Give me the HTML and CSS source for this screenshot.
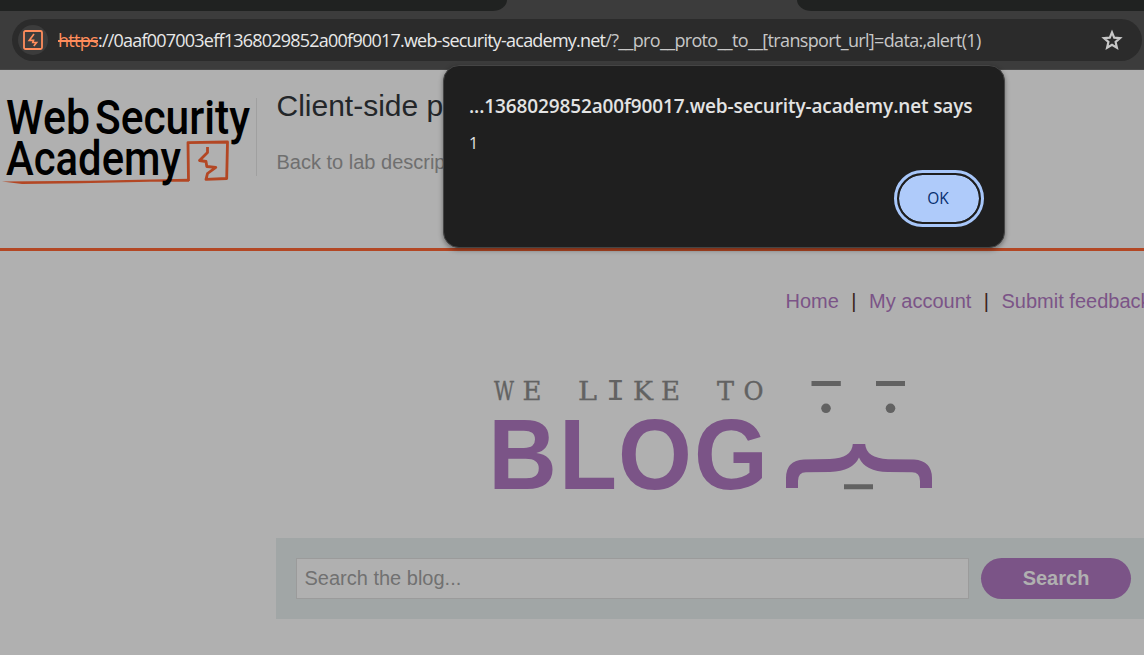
FILE: index.html
```html
<!DOCTYPE html>
<html lang="en">
<head>
<meta charset="utf-8">
<title>Client-side prototype pollution</title>
<link rel="stylesheet" href="styles.css">
</head>
<body>
<div class="window">
  <header class="browser">
    <div class="tabs"><div class="tab-left"></div><div class="tab-right"></div></div>
    <div class="address">
      <span class="site-icon">
        <svg width="20" height="20" viewBox="0 0 20 20"><rect x="1" y="1" width="18" height="18" rx="1.5" fill="none" stroke="#ff8d5c" stroke-width="1.8"/><path d="M11 4 6.300 10.300H10.500L9.800 12.500H13.500L10.800 16" fill="none" stroke="#ff8d5c" stroke-width="1.700"/></svg>
      </span>
      <span class="url"><span class="scheme">https</span><span class="host"><span class="dim">://</span>0aaf007003eff1368029852a00f90017.web-security-academy.net</span><span class="path">/?__pro__proto__to__[transport_url]=data:,alert(1)</span></span>
      <svg class="star" width="24" height="24" viewBox="0 0 24 24"><path d="m12 4.300 2.200 5.400 5.800.5-4.400 3.800 1.300 5.700-4.900-3-4.900 3 1.300-5.700L4 10.200l5.800-.5z" fill="none" stroke="#c7c7c7" stroke-width="2.200"/></svg>
    </div>
  </header>
  <main class="page">
    <section class="lab-header">
      <svg class="logo" width="256" height="110" viewBox="0 85 256 110">
        <g class="logo-text">
          <text x="6" y="134" textLength="84" lengthAdjust="spacingAndGlyphs">Web</text>
          <text x="95" y="134" textLength="155" lengthAdjust="spacingAndGlyphs">Security</text>
        </g>
        <g fill="none" stroke="#b34724" stroke-width="2.8" stroke-linejoin="round">
          <path d="M188.500 181 188 142.600 227.500 142 226.700 178.500 206 179.400 207.500 173.500 215.800 167.300 206.800 166.500 206 161.500 199.500 160.500 207.500 152.500 207.500 147"/>
        </g>
        <path d="M2 181.500 90 180.700 189 178.800v3L150 181.700 80 183.300 22 184z" fill="#b34724"/>
        <text class="logo-text" x="6" y="175" textLength="175" lengthAdjust="spacingAndGlyphs">Academy</text>
      </svg>
      <div class="divider"></div>
      <div class="titles">
        <h1>Client-side p</h1>
        <a class="back">Back to lab descrip</a>
      </div>
    </section>
    <nav class="links"><a>Home</a><span>|</span><a>My account</a><span>|</span><a>Submit feedback</a></nav>
    <svg class="blog-logo" width="450" height="130" viewBox="490 370 450 130">
      <text class="slab" y="400"><tspan x="494" textLength="20" lengthAdjust="spacingAndGlyphs">W</tspan><tspan x="522.500" textLength="19" lengthAdjust="spacingAndGlyphs">E</tspan> <tspan x="578" textLength="19" lengthAdjust="spacingAndGlyphs">L</tspan><tspan class="mono" x="606" textLength="19" lengthAdjust="spacingAndGlyphs">I</tspan><tspan x="633" textLength="20" lengthAdjust="spacingAndGlyphs">K</tspan><tspan x="661" textLength="19" lengthAdjust="spacingAndGlyphs">E</tspan> <tspan x="717" textLength="17" lengthAdjust="spacingAndGlyphs">T</tspan><tspan x="743.500" textLength="20" lengthAdjust="spacingAndGlyphs">O</tspan></text>
      <text class="blog" y="489" transform="scale(.95 1)" x="514 588.500 650.500 730.500">BLOG</text>
      <path d="M811.500 381h29.300v5h-29.300zM876 381h29v5h-29zM844 484.300h29v5h-29z" fill="#626262"/>
      <circle cx="826" cy="408.300" r="4.800" fill="#626262"/><circle cx="890.500" cy="408.300" r="4.800" fill="#626262"/>
      <path d="M786 488v-10Q786 460.500 804 459.500L830 459Q852 458 852.800 444H865.200Q866 458 888 459.200L914 459.500Q932 461 932 478V488H920V481Q920 472.500 912 472.300L888 472Q865 471.500 859 457.500Q853 471 830 472L806 472.300Q798 472.500 798 481V488z" fill="#7b5487"/>
    </svg>
    <form class="search"><input type="text" placeholder="Search the blog..."><button type="button">Search</button></form>
  </main>
  <div class="dialog" role="alertdialog">
    <div class="dialog-title"><span>...1368029852a00f90017.web-security-academy.net says</span></div>
    <div class="dialog-body">1</div>
    <button class="ok" type="button">OK</button>
  </div>
</div>
</body>
</html>
```
FILE: styles.css
```css
* { box-sizing: border-box; }
body { margin: 0; background: #b0b0b0; font-family: "Liberation Sans", Arial, sans-serif; overflow: hidden; }
.window { position: relative; width: 1144px; height: 655px; overflow: hidden; }
.browser { height: 70px; background: #3c3c3c; border-bottom: 1px solid #484848; }
.tabs { display: flex; justify-content: space-between; height: 11px; margin-bottom: 8px; }
.tab-left, .tab-right { background: #202221; height: 11px; }
.tab-left { width: 507px; border-bottom-right-radius: 16px 12px; }
.tab-right { width: 347px; border-bottom-left-radius: 16px 12px; }
.address { display: flex; align-items: center; height: 42px; width: 1130px; margin-left: 12px; padding: 0 18px 0 6px; border-radius: 21px; background: #2b2b2b; }
.site-icon { display: flex; align-items: center; justify-content: center; width: 30px; height: 30px; border-radius: 50%; background: #3c3c3c; flex: none; }
.url { margin-left: 10px; flex: 1; white-space: nowrap; font: 18px/26px "Open Sans", "Noto Sans", sans-serif; color: #c7c7c7; }
.url span { display: inline-block; }
.scheme { color: #ff8d5c; text-decoration: line-through; text-decoration-thickness: 2px; letter-spacing: -0.7px; }
.host { color: #e8e8e8; letter-spacing: -0.78px; }
.path { letter-spacing: -0.66px; }
.star { flex: none; }
.lab-header { display: flex; height: 181px; padding-top: 15px; border-bottom: 3px solid #b34724; }
.logo, .divider { flex: none; }
.logo { overflow: visible; }
.logo-text { font-family: Roboto, sans-serif; font-size: 48px; font-weight: 500; fill: #000; }
.divider { width: 1px; height: 78px; margin-top: 13px; background: #a0a0a0; }
.titles { margin-left: 19.500px; white-space: nowrap; }
h1 { margin: 4px 0 0; font-size: 30px; line-height: 34px; font-weight: 400; color: #232629; }
.back { display: block; margin-top: 27px; font-size: 20px; line-height: 24px; color: #6f6f6f; }
.links { display: flex; margin: 38px 0 0 785.500px; font-size: 20px; line-height: 24px; white-space: nowrap; color: #7b5487; }
.links span { margin: 0 12.500px; color: #3b251c; }
.blog-logo { display: block; margin: 57px 0 0 490px; overflow: visible; }
.slab { font-family: "DejaVu Serif", serif; font-size: 26px; fill: #626262; stroke: #626262; stroke-width: .4px; }
.mono { font-family: "DejaVu Sans Mono", monospace; stroke: none; }
.blog { font-family: "Liberation Sans", sans-serif; font-size: 100px; font-weight: 700; fill: #7b5487; }
.search { display: flex; width: 1000px; height: 81px; margin: 38px 0 0 276px; padding: 20px; background: #a1a6a6; }
.search input { width: 673px; height: 41px; padding: 0 7.500px; border: 1px solid #9b9b9b; background: #b0b0b0; font: 20px "Liberation Sans", sans-serif; outline: 0; }
.search input::placeholder { color: #717171; }
.search button { width: 150px; height: 41px; margin-left: 12px; border: 0; border-radius: 21px; background: #7b5487; color: #b0b0b0; font: 700 20px "Liberation Sans", sans-serif; }
.dialog { position: absolute; left: 443px; top: 65px; width: 562px; height: 183px; padding: 26px 21px 0 25px; border: 1px solid #454545; border-radius: 16px; background: #1f1f1f; color: #e3e3e3; box-shadow: 0 2px 5px rgba(0, 0, 0, .4); font-family: "Open Sans", "Noto Sans", sans-serif; }
.dialog-title { font-size: 19px; line-height: 28px; font-weight: 600; white-space: nowrap; letter-spacing: -0.12px; }
.dialog-body { margin-top: 12px; font-size: 16px; line-height: 22px; }
.ok { display: block; width: 84px; height: 51px; margin: 19px 2px 0 auto; padding: 0 8px 1px 6px; border: 2px solid #1f1f1f; border-radius: 26px; background: #afcbfa; background-clip: padding-box; outline: 3px solid #a8c7fa; color: #062e6f; font: 500 15.500px "Open Sans", "Noto Sans", sans-serif; }
```
